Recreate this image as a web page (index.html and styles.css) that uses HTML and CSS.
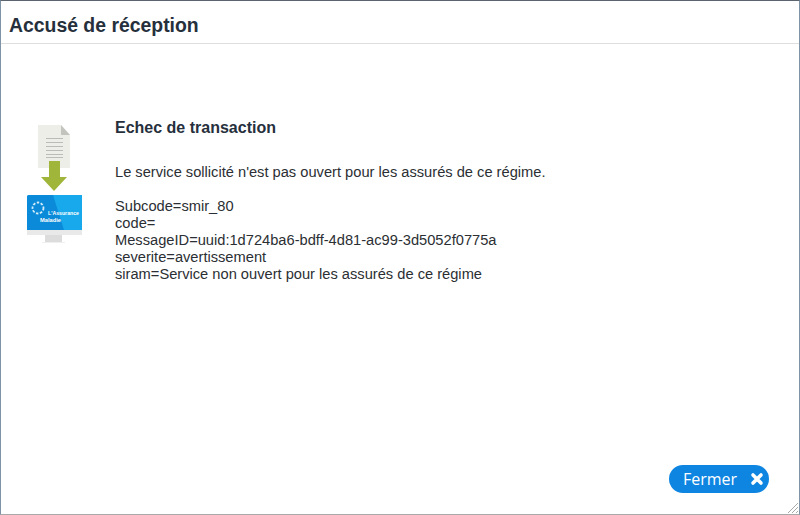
FILE: index.html
```html
<!DOCTYPE html>
<html lang="fr">
<head>
<meta charset="utf-8">
<title>Accusé de réception</title>
<link rel="stylesheet" href="styles.css">
</head>
<body>
<div class="dialog">
  <header class="dialog-header"><h1 class="dialog-title">Accusé de réception</h1></header>
  <main class="dialog-body">
    <div class="illustration">
      <svg class="illustration-svg" width="60" height="125" viewBox="0 0 60 125" xmlns="http://www.w3.org/2000/svg">
        <path d="M14 0H37L46 10V43H14Z" fill="#eeeee8"/>
        <path d="M37 0L46 10H37Z" fill="#c4c4bf"/>
        <g fill="#b9bcb8">
          <rect x="22" y="13" width="17" height="1"/>
          <rect x="22" y="17" width="17" height="1"/>
          <rect x="22" y="21" width="17" height="1"/>
          <rect x="22" y="25" width="17" height="1"/>
          <rect x="22" y="29" width="17" height="1"/>
          <rect x="22" y="32" width="17" height="1"/>
        </g>
        <path d="M25 36H36V52H43L30 66L17 52H25Z" fill="#a0b63a"/>
        <path d="M5 70H58V105H3V72Q3 70 5 70Z" fill="#17a9ec"/>
        <path d="M5 70H29L40 105H3V72Q3 70 5 70Z" fill="#0a8ad8"/>
        <rect x="3" y="105" width="55" height="5" fill="#e9e9e9"/>
        <rect x="21" y="110" width="17" height="7" fill="#dcdcdc"/>
        <rect x="18" y="117" width="23" height="1" fill="#efefef"/>
        <circle cx="14" cy="83" r="5.5" fill="none" stroke="#d5edfa" stroke-width="1.8" stroke-dasharray="2.5 1.5"/>
        <text class="logo-text" x="24" y="90" textLength="31" lengthAdjust="spacingAndGlyphs">L'Assurance</text>
        <text class="logo-text" x="16" y="96.500" textLength="21" lengthAdjust="spacingAndGlyphs">Maladie</text>
      </svg>
    </div>
    <div class="message">
      <h2 class="message-title">Echec de transaction</h2>
      <p class="message-lead">Le service sollicité n'est pas ouvert pour les assurés de ce régime.</p>
      <p class="message-details">Subcode=smir_80<br>code=<br>MessageID=uuid:1d724ba6-bdff-4d81-ac99-3d5052f0775a<br>severite=avertissement<br>siram=Service non ouvert pour les assurés de ce régime</p>
    </div>
  </main>
  <footer class="dialog-footer">
    <button class="close-button" type="button">Fermer
      <svg class="close-icon" width="14" height="14" viewBox="0 0 14 14" xmlns="http://www.w3.org/2000/svg"><path d="M3 3L11 11M11 3L3 11" stroke="#fff" stroke-width="3.6" stroke-linecap="round"/></svg>
    </button>
  </footer>
  <svg class="resize-grip" width="14" height="14" viewBox="0 0 14 14" xmlns="http://www.w3.org/2000/svg"><path d="M13 3L3 13M13 7L7 13M13 11L11 13" stroke="#a8a8a8" stroke-width="1"/></svg>
</div>
</body>
</html>
```
FILE: styles.css
```css
* { box-sizing: border-box; }
html, body { margin: 0; height: 100%; }
body { background: #fff; overflow: hidden; }
.dialog {
  position: relative;
  width: 800px;
  height: 515px;
  display: flex;
  flex-direction: column;
  background: #fff;
  border: 1px solid #7f93a6;
  border-top-color: #5c6470;
  border-bottom-color: #a9a9a9;
  font-family: "Liberation Sans", Arial, sans-serif;
  color: #2b2f33;
}
.dialog-header {
  height: 43px;
  flex: none;
  border-bottom: 1px solid #dedede;
  padding: 6px 8px 0;
  display: flex;
  align-items: center;
}
.dialog-title {
  margin: 0;
  font-size: 19.4px;
  font-weight: 700;
  color: #26303c;
}
.dialog-body {
  flex: 1;
  display: flex;
  padding: 73px 0 0 23px;
}
.illustration { width: 91px; flex: none; padding-top: 8px; }
.illustration-svg { display: block; }
.message { font-size: 14.67px; line-height: 17px; padding-top: 2px; }
.message-title { margin: 0 0 28px; font-size: 16px; line-height: 17px; font-weight: 700; color: #26303c; }
.message-lead { margin: 0 0 17px; }
.message-details { margin: 0; }
.dialog-footer {
  flex: none;
  display: flex;
  justify-content: flex-end;
  padding: 0 30px 21px 0;
}
.close-button {
  height: 28px;
  width: 100px;
  border: 0;
  border-radius: 14px;
  background: #0f85e2;
  color: #fff;
  font-family: "Open Sans", sans-serif;
  font-size: 16px;
  padding: 0 5px 0 14px;
  display: flex;
  align-items: center;
  justify-content: space-between;
}
.close-icon { display: block; }
.logo-text { font-family: "Liberation Sans", sans-serif; font-size: 6px; font-weight: 700; fill: #fff; }
.resize-grip { position: absolute; right: 0; bottom: 0; }
```
